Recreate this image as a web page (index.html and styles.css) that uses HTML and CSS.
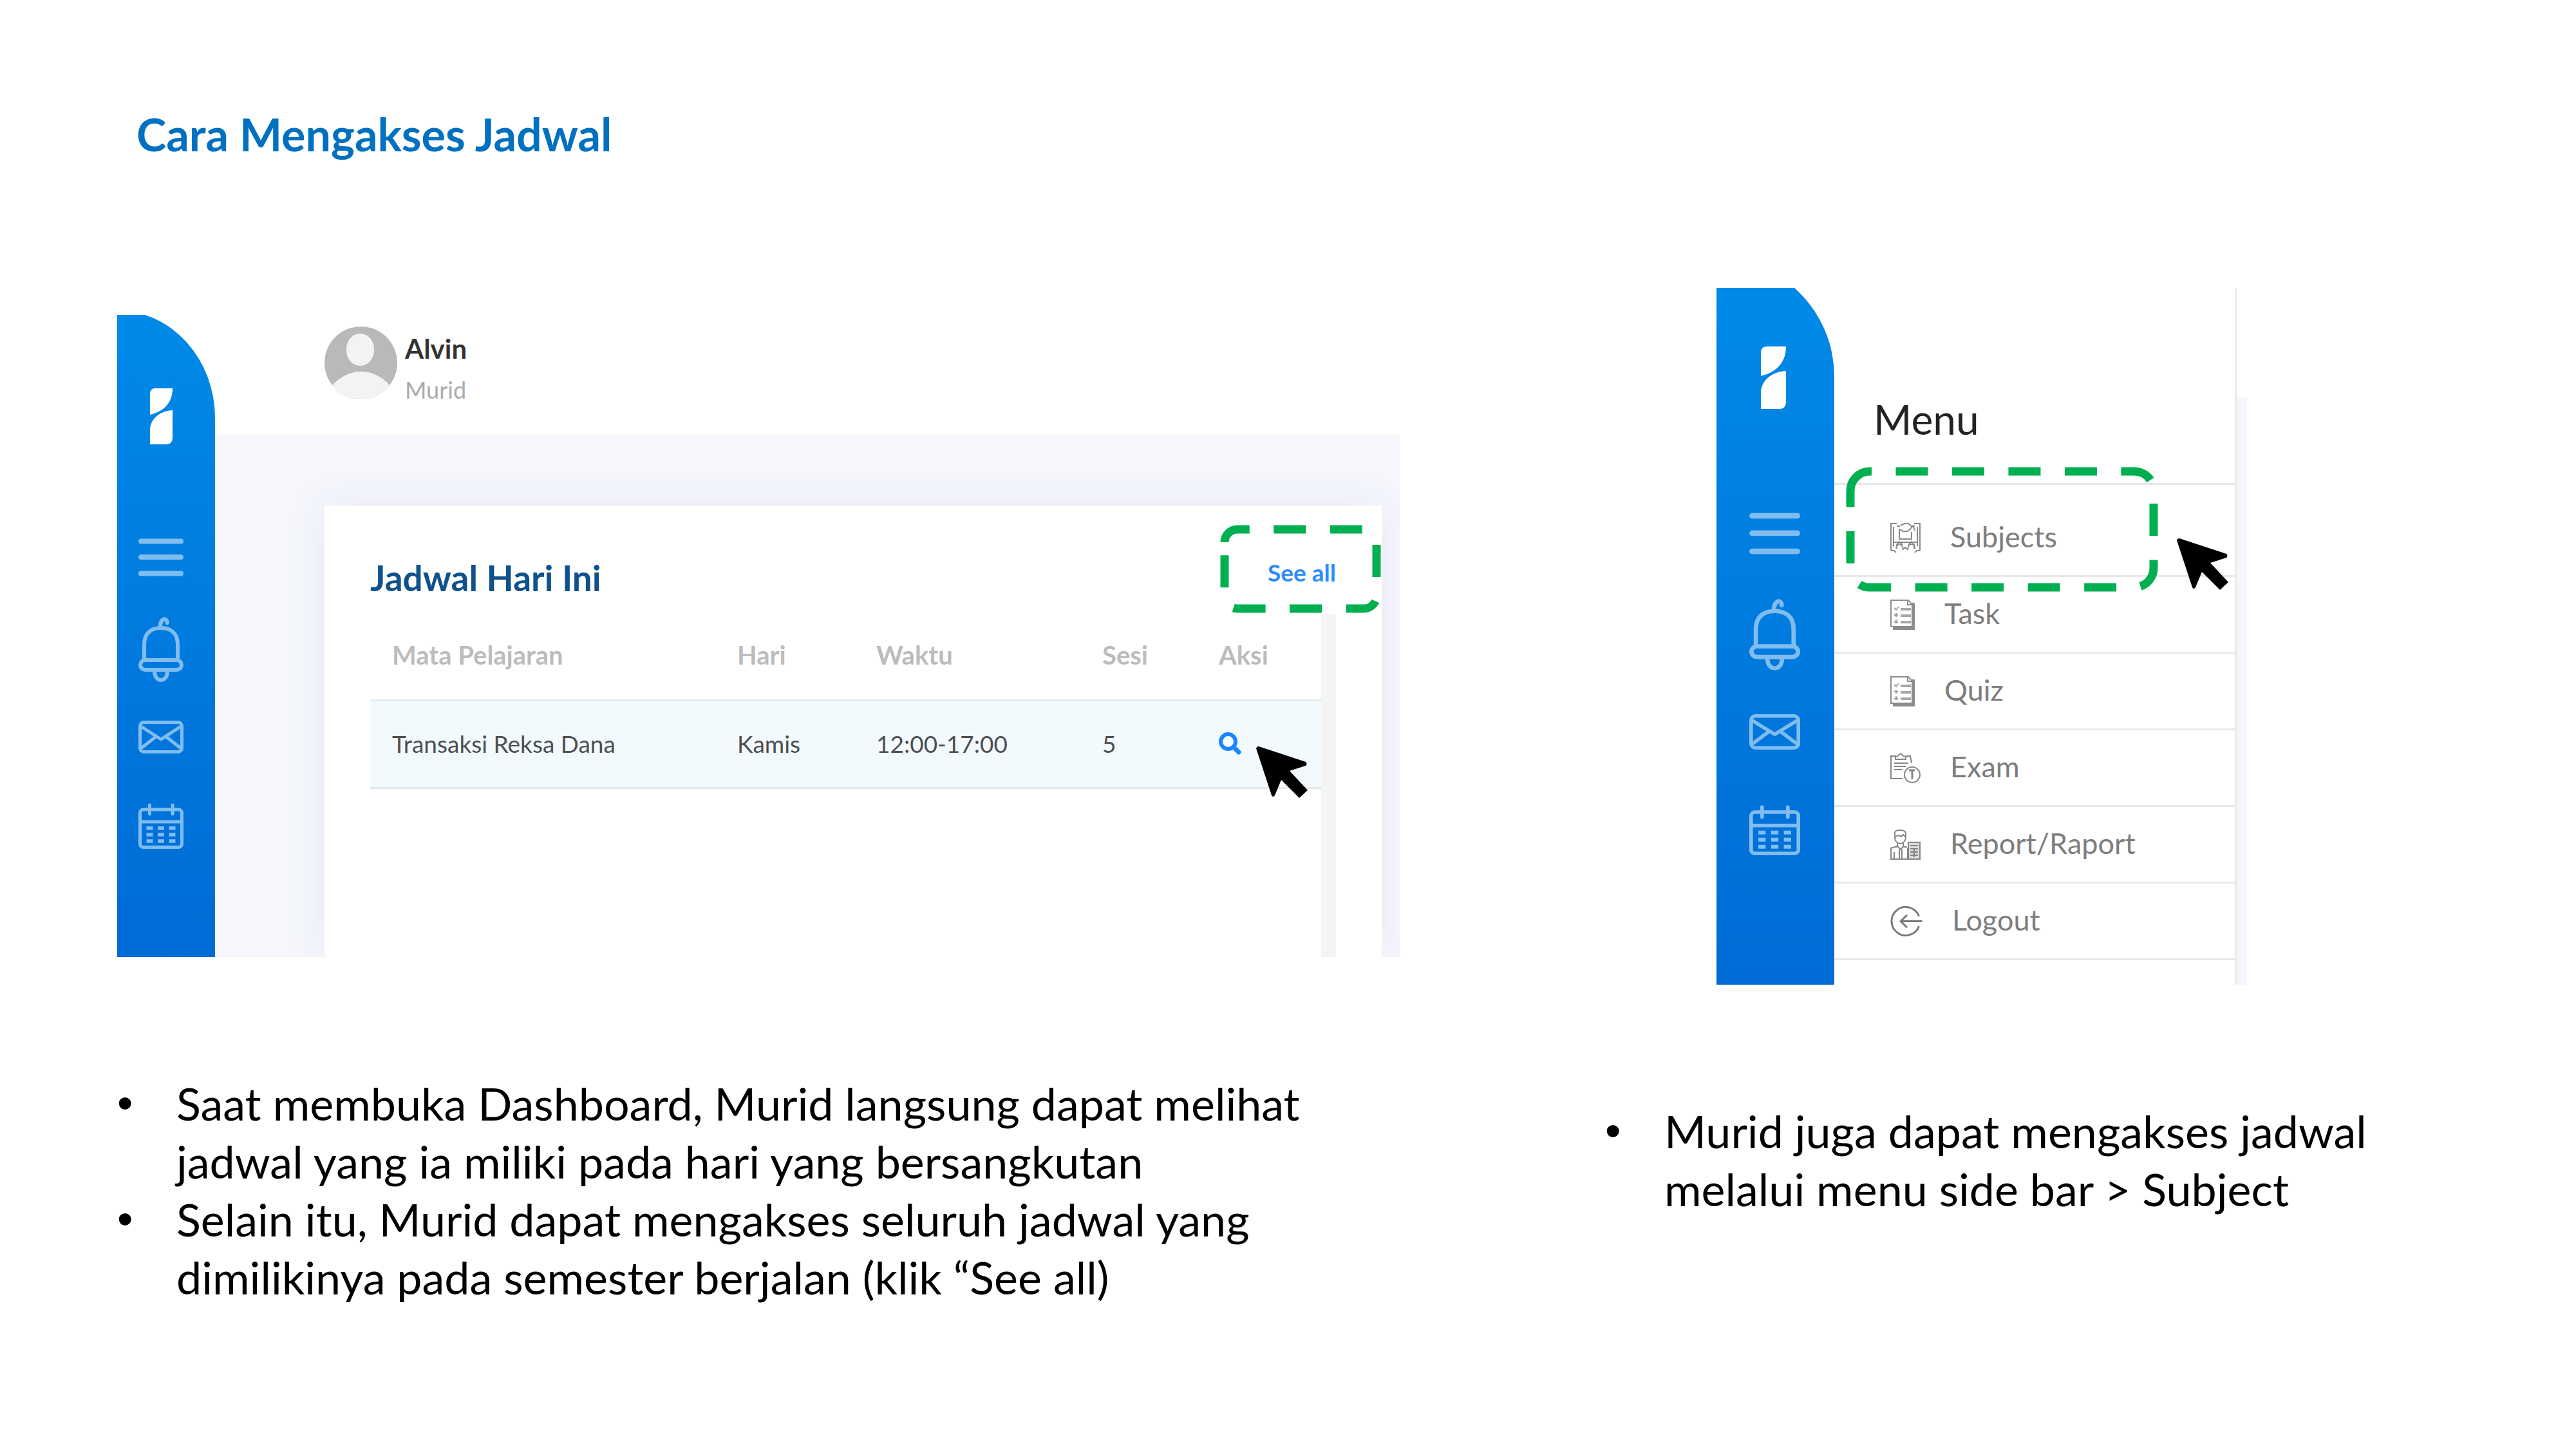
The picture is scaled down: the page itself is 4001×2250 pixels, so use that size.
FILE: index.html
```html
<!DOCTYPE html>
<html lang="id">
<head>
<meta charset="utf-8">
<meta name="viewport" content="width=device-width, initial-scale=1">
<title>Cara Mengakses Jadwal</title>
<link rel="stylesheet" href="styles.css">
</head>
<body>
<svg class="sprite" aria-hidden="true">
  <symbol id="logo" viewBox="0 0 35 87" preserveAspectRatio="none">
    <path fill="#fff" d="M8 0H35C35 22 22 36 0 41V9Q0 0 8 0ZM35 34V76Q35 87 26 87H0V62C2 46 16 35 35 34Z"/>
  </symbol>
  <symbol id="bars" viewBox="0 0 70 59" preserveAspectRatio="none">
    <path fill="none" stroke="#80bdef" stroke-width="8" stroke-linecap="round" d="M4 4.500H66M4 29H66M4 54.500H66"/>
  </symbol>
  <symbol id="bell" viewBox="0 0 70 101" preserveAspectRatio="none">
    <g fill="none" stroke="#80bdef" stroke-width="6" stroke-linecap="round">
      <path d="M34 17C33 1 45 0 44.500 9"/>
      <path d="M9 67V43C9 25 20 17 35 17S61 25 61 43V67"/>
      <rect x="3" y="67" width="64" height="15" rx="7.500"/>
      <path d="M25 83C24 103 46 103 45 83"/>
    </g>
  </symbol>
  <symbol id="mail" viewBox="0 0 70 51" preserveAspectRatio="none">
    <g fill="none" stroke="#80bdef" stroke-width="5" stroke-linejoin="round">
      <rect x="2.500" y="2.500" width="65" height="46" rx="6"/>
      <path d="M4 9L35 29L66 9M4 43L27 25M66 43L43 25"/>
    </g>
  </symbol>
  <symbol id="calendar" viewBox="0 0 70 71" preserveAspectRatio="none">
    <g fill="none" stroke="#80bdef" stroke-width="5">
      <rect x="2.500" y="10" width="65" height="58.500" rx="5"/>
      <path d="M2 29H68"/>
      <path stroke-linecap="round" d="M17.500 3V17M53 3V17"/>
      <path stroke-width="5.500" stroke-dasharray="10 7.500" d="M12.500 39H58M12.500 49H58M12.500 59H58"/>
    </g>
  </symbol>
  <symbol id="sheet" viewBox="0 0 38 47">
    <g fill="none" stroke="#8c8c8c">
      <path stroke-width="5" d="M4 44.500H35.500V5"/>
      <path stroke-width="2" d="M1 1H28L34 8V42H1ZM27 1V8H34"/>
      <path stroke-width="2" stroke="#a0a0a0" d="M6 13L9 16L13 11M6 24H12M9 21V27M6 35H12M9 31V37"/>
      <path stroke-width="4" stroke="#a8a8a8" d="M16 15H32M16 25H32M16 35H32"/>
    </g>
  </symbol>
  <symbol id="pointer" viewBox="0 0 80 80">
    <path d="M0 3Q1 0 4 0L77 24Q80 27 77 30L52 38L80 68L67 80L39 52L29 76Q26 80 24 76Z"/>
  </symbol>
</svg>

<header class="slide-head"><h1>Cara Mengakses Jadwal</h1></header>

<main class="columns">
  <section class="column">
    <div class="shot dashboard">
      <nav class="rail" aria-label="Navigasi dashboard">
        <svg class="rail-logo"><use href="#logo"/></svg>
        <svg class="rail-bars"><use href="#bars"/></svg>
        <svg class="rail-bell"><use href="#bell"/></svg>
        <svg class="rail-mail"><use href="#mail"/></svg>
        <svg class="rail-calendar"><use href="#calendar"/></svg>
      </nav>
      <div class="content">
        <div class="user">
          <svg class="avatar" viewBox="0 0 113 113">
            <clipPath id="round"><circle cx="56.500" cy="56.500" r="56.500"/></clipPath>
            <g clip-path="url(#round)">
              <path fill="#b9b9b9" d="M0 0H113V113H0Z"/>
              <rect x="34" y="11" width="43" height="50" rx="21.500" ry="24" fill="#f3f3f3"/>
              <path fill="#f3f3f3" d="M4 113L12 91Q32 70 57 70T101 91L110 113Z"/>
            </g>
          </svg>
          <div class="user-text">
            <div class="user-name">Alvin</div>
            <div class="user-role">Murid</div>
          </div>
        </div>
        <div class="area">
          <div class="card">
            <div class="card-head">
              <h2>Jadwal Hari Ini</h2>
              <a class="see-all" href="#jadwal">See all</a>
            </div>
            <div class="table-wrap">
              <table id="jadwal">
                <colgroup><col class="c-subject"><col class="c-day"><col class="c-time"><col class="c-session"><col></colgroup>
                <thead>
                  <tr><th scope="col">Mata Pelajaran</th><th scope="col">Hari</th><th scope="col">Waktu</th><th scope="col">Sesi</th><th scope="col">Aksi</th></tr>
                </thead>
                <tbody>
                  <tr>
                    <td>Transaksi Reksa Dana</td><td>Kamis</td><td>12:00-17:00</td><td>5</td>
                    <td><button class="search" type="button" aria-label="Lihat"><svg viewBox="0 0 35 35"><g fill="none" stroke="#1a85ff"><circle cx="14.500" cy="14.500" r="11.500" stroke-width="6"/><path stroke-width="7" stroke-linecap="round" d="M24 24L31 31"/></g></svg></button></td>
                  </tr>
                </tbody>
              </table>
              <div class="track"></div>
            </div>
            <svg class="mark mark-see" viewBox="0 0 248 135"><path stroke-dasharray="50 37.500" d="M6 26A20 20 0 0 1 26 6H222A20 20 0 0 1 242 26V109A20 20 0 0 1 222 129H26A20 20 0 0 1 6 109Z"/></svg>
            <svg class="cursor cursor-search"><use href="#pointer"/></svg>
          </div>
        </div>
      </div>
    </div>
    <ul class="notes">
      <li>Saat membuka Dashboard, Murid langsung dapat melihat jadwal yang ia miliki pada hari yang bersangkutan</li>
      <li>Selain itu, Murid dapat mengakses seluruh jadwal yang dimilikinya pada semester berjalan (klik “See all)</li>
    </ul>
  </section>

  <section class="column">
    <div class="shot sidebar">
      <nav class="rail rail-wide" aria-label="Navigasi">
        <svg class="rail-logo"><use href="#logo"/></svg>
        <svg class="rail-bars"><use href="#bars"/></svg>
        <svg class="rail-bell"><use href="#bell"/></svg>
        <svg class="rail-mail"><use href="#mail"/></svg>
        <svg class="rail-calendar"><use href="#calendar"/></svg>
      </nav>
      <nav class="menu" aria-label="Menu">
        <h2>Menu</h2>
        <ul>
          <li><a href="#subjects">
            <svg class="icon" viewBox="0 0 47 47"><g fill="none" stroke="#8a8a8a" stroke-width="2">
              <path d="M10 1H1V43M37 1H46V43M5 6V36M42 6V36M10 5H15M32 5H38"/>
              <path d="M14 10V25H33V14M14 10L20 13H27L31 9M16 4L22 1H28L33 5M35 4L38 12M36 4L31 9"/>
              <path d="M6 30H41M10 40V34L14 29L19 34M28 34L33 29L37 34V40"/>
              <path d="M1 43H6L9 46M46 43H41L38 46M9 40Q10 33 14 33T20 40M27 40Q28 33 33 33T38 40M19 42L23 38L28 42"/></g></svg>
            Subjects</a></li>
          <li><a href="#task"><svg class="icon icon-sheet"><use href="#sheet"/></svg>Task</a></li>
          <li><a href="#quiz"><svg class="icon icon-sheet"><use href="#sheet"/></svg>Quiz</a></li>
          <li><a href="#exam">
            <svg class="icon" viewBox="0 0 47 47"><g fill="none" stroke="#858585" stroke-width="2">
              <path d="M9 5H1V40H19M24 5H31L33 16"/>
              <path d="M8 10V6L12 5Q16 -2 20 5L24 6V10ZM6 16H28M6 21H24M6 26H19"/>
              <circle cx="34" cy="34" r="12"/><path d="M29 27H38M34 27V41" stroke-width="3"/></g></svg>
            Exam</a></li>
          <li><a href="#report">
            <svg class="icon" viewBox="0 0 47 47"><g fill="none" stroke="#858585" stroke-width="2">
              <path d="M7 14V5Q8 1 15 1T24 5V14M7 12L12 9L17 11L20 8L24 12M7 13Q8 21 15 22Q23 21 24 13"/>
              <path d="M11 21V26L1 29V46H27V29M20 21V26L26 28M11 26L16 31L20 26M14 31V45M18 31V45M6 35V45"/>
              <path fill="#ddd" d="M28 20H46V46H28Z"/><path d="M31 25H43M31 30H43M31 35H43M31 40H43M37 30V43"/></g></svg>
            Report/Raport</a></li>
          <li><a href="#logout">
            <svg class="icon icon-logout" viewBox="0 0 50 48"><g fill="none" stroke="#777" stroke-width="3">
              <path d="M45 16A22.500 22.500 0 1 0 45 32M16 24H50M26 14L16 24L26 34"/></g></svg>
            Logout</a></li>
        </ul>
        <svg class="mark mark-subjects" viewBox="0 0 483 192"><path stroke-dasharray="50 37.500" d="M6 36A30 30 0 0 1 36 6H447A30 30 0 0 1 477 36V156A30 30 0 0 1 447 186H36A30 30 0 0 1 6 156Z"/></svg>
        <svg class="cursor cursor-subjects"><use href="#pointer"/></svg>
      </nav>
      <div class="edge"></div>
    </div>
    <ul class="notes">
      <li>Murid juga dapat mengakses jadwal melalui menu side bar &gt; Subject</li>
    </ul>
  </section>
</main>
</body>
</html>
```
FILE: styles.css
```css
* { box-sizing: border-box; }

body {
  margin: 0;
  background: #fff;
  color: #000;
  font-family: Lato, sans-serif;
}

h1, h2, ul { margin: 0; padding: 0; font-weight: inherit; }
ul { list-style: none; }
a { text-decoration: none; }
svg { display: block; flex: none; }
.sprite { position: absolute; width: 0; height: 0; }

.slide-head { padding: 168px 212px 0; }
.slide-head h1 {
  color: #0070c0;
  font-size: 70px;
  line-height: 80px;
  font-weight: 700;
}

.columns {
  display: grid;
  grid-template-columns: 1992fr 1237fr;
  gap: 319px;
  padding: 199px 271px 0 182px;
}

.shot { display: flex; }
.dashboard { min-height: 997px; margin-top: 42px; }
.sidebar { min-height: 1082px; max-width: 824px; margin-left: 173px; }

/* Blue icon rail */
.rail {
  display: flex;
  flex: none;
  flex-direction: column;
  align-items: center;
  width: 152px;
  padding-top: 114px;
  background: linear-gradient(#008ae7, #006bd6);
  clip-path: inset(-7px 0 0 0 round 0 152px 0 0 / 0 167px 0 0);
}
.rail svg { width: 70px; margin-right: 16px; }
.rail .rail-logo { width: 35px; height: 87px; margin-bottom: 146px; }
.rail .rail-bars { height: 59px; margin-bottom: 63px; }
.rail .rail-bell { height: 101px; margin-bottom: 60px; }
.rail .rail-mail { height: 51px; margin-bottom: 77px; }
.rail .rail-calendar { height: 71px; }

.rail-wide {
  width: 183px;
  padding-top: 91px;
  clip-path: inset(-46px 0 0 0 round 0 183px 0 0 / 0 184px 0 0);
}
.rail-wide svg { width: 79px; margin-right: 2px; }
.rail-wide .rail-logo { width: 39px; height: 97px; margin-right: 6px; margin-bottom: 161px; }
.rail-wide .rail-bars { height: 65px; margin-bottom: 69px; }
.rail-wide .rail-bell { height: 111px; margin-bottom: 68px; }
.rail-wide .rail-mail { height: 55px; margin-bottom: 86px; }
.rail-wide .rail-calendar { height: 78px; }

/* Dashboard */
.content { display: flex; flex: 1; flex-direction: column; }
.user {
  display: flex;
  gap: 12px;
  height: 186px;
  padding: 18px 0 0 170px;
}
.avatar { width: 113px; height: 113px; }
.user-text { padding-top: 2px; line-height: 64px; }
.user-name { color: #333; font-size: 42px; font-weight: 700; }
.user-role { color: #aaa; font-size: 36px; }

.area {
  display: flex;
  flex: 1;
  padding: 110px 28px 0 170px;
  overflow: hidden;
  background: #f5f7fc;
}
.card {
  position: relative;
  display: flex;
  flex: 1;
  flex-direction: column;
  padding: 80px 71px 0;
  background: #fff;
  box-shadow: 0 0 60px rgba(90, 50, 200, 0.08);
}
.card-head { display: flex; justify-content: space-between; }
.card-head h2 {
  color: #0f518c;
  font-size: 55px;
  line-height: 64px;
  font-weight: 700;
}
.see-all {
  color: #2a8aff;
  font-size: 37px;
  line-height: 48px;
  font-weight: 700;
}
.table-wrap { display: flex; flex: 1; margin-top: 24px; }
.track { flex: none; width: 23px; background: #f4f4f4; }

table {
  flex: 1;
  align-self: flex-start;
  border-collapse: separate;
  border-spacing: 0;
  table-layout: fixed;
}
.c-subject { width: 536px; }
.c-day { width: 216px; }
.c-time { width: 351px; }
.c-session { width: 181px; }
th, td {
  border-bottom: 3px solid #e6eaec;
  text-align: left;
  vertical-align: top;
  white-space: nowrap;
}
th {
  padding: 40px 0 45px 34px;
  color: #bcbcbc;
  font-size: 40px;
  line-height: 48px;
  font-weight: 700;
}
td {
  padding: 44px 0 45px 34px;
  background: #f2fafd;
  color: #4c4f52;
  font-size: 37px;
  line-height: 44px;
}
.search {
  display: block;
  padding: 4px 0;
  border: 0;
  background: none;
}
.search svg { width: 35px; height: 35px; }

/* Annotations over the screens */
.mark, .cursor { position: absolute; }
.mark {
  fill: none;
  stroke: #00b050;
  stroke-width: 13px;
  overflow: visible;
  pointer-events: none;
}
.mark-see { top: 31px; right: 2px; width: 248px; height: 135px; }
.mark-subjects { top: 279px; left: 19px; width: 483px; height: 192px; }
.cursor { width: 80px; height: 80px; }
.cursor-search { top: 374px; right: 115px; }
.cursor-subjects { top: 389px; right: 10px; }

/* Menu */
.menu {
  position: relative;
  flex: 1;
  padding-top: 166px;
  border-right: 3px solid #e9eaec;
}
.menu h2 {
  padding: 0 0 61px 61px;
  border-bottom: 3px solid #e9e9e9;
  color: #222;
  font-size: 64px;
  line-height: 76px;
}
.menu a {
  display: flex;
  align-items: flex-end;
  gap: 46px;
  padding: 30px 0 34px 87px;
  border-bottom: 3px solid #e9e9e9;
  color: #7d7d7d;
  font-size: 45px;
  line-height: 52px;
}
.menu li:first-child a { padding-top: 54px; }
.icon { width: 47px; height: 47px; }
.icon-sheet { width: 38px; }
.icon-logout { width: 50px; }
.edge { flex: none; width: 16px; margin-top: 170px; background: #f4f6fb; }

/* Notes */
.notes {
  margin-top: 182px;
  font-size: 70px;
  line-height: 90px;
}
.notes li { display: flex; }
.notes li::before {
  content: "•";
  flex: none;
  width: 92px;
  font-family: "Liberation Sans", sans-serif;
}
```
